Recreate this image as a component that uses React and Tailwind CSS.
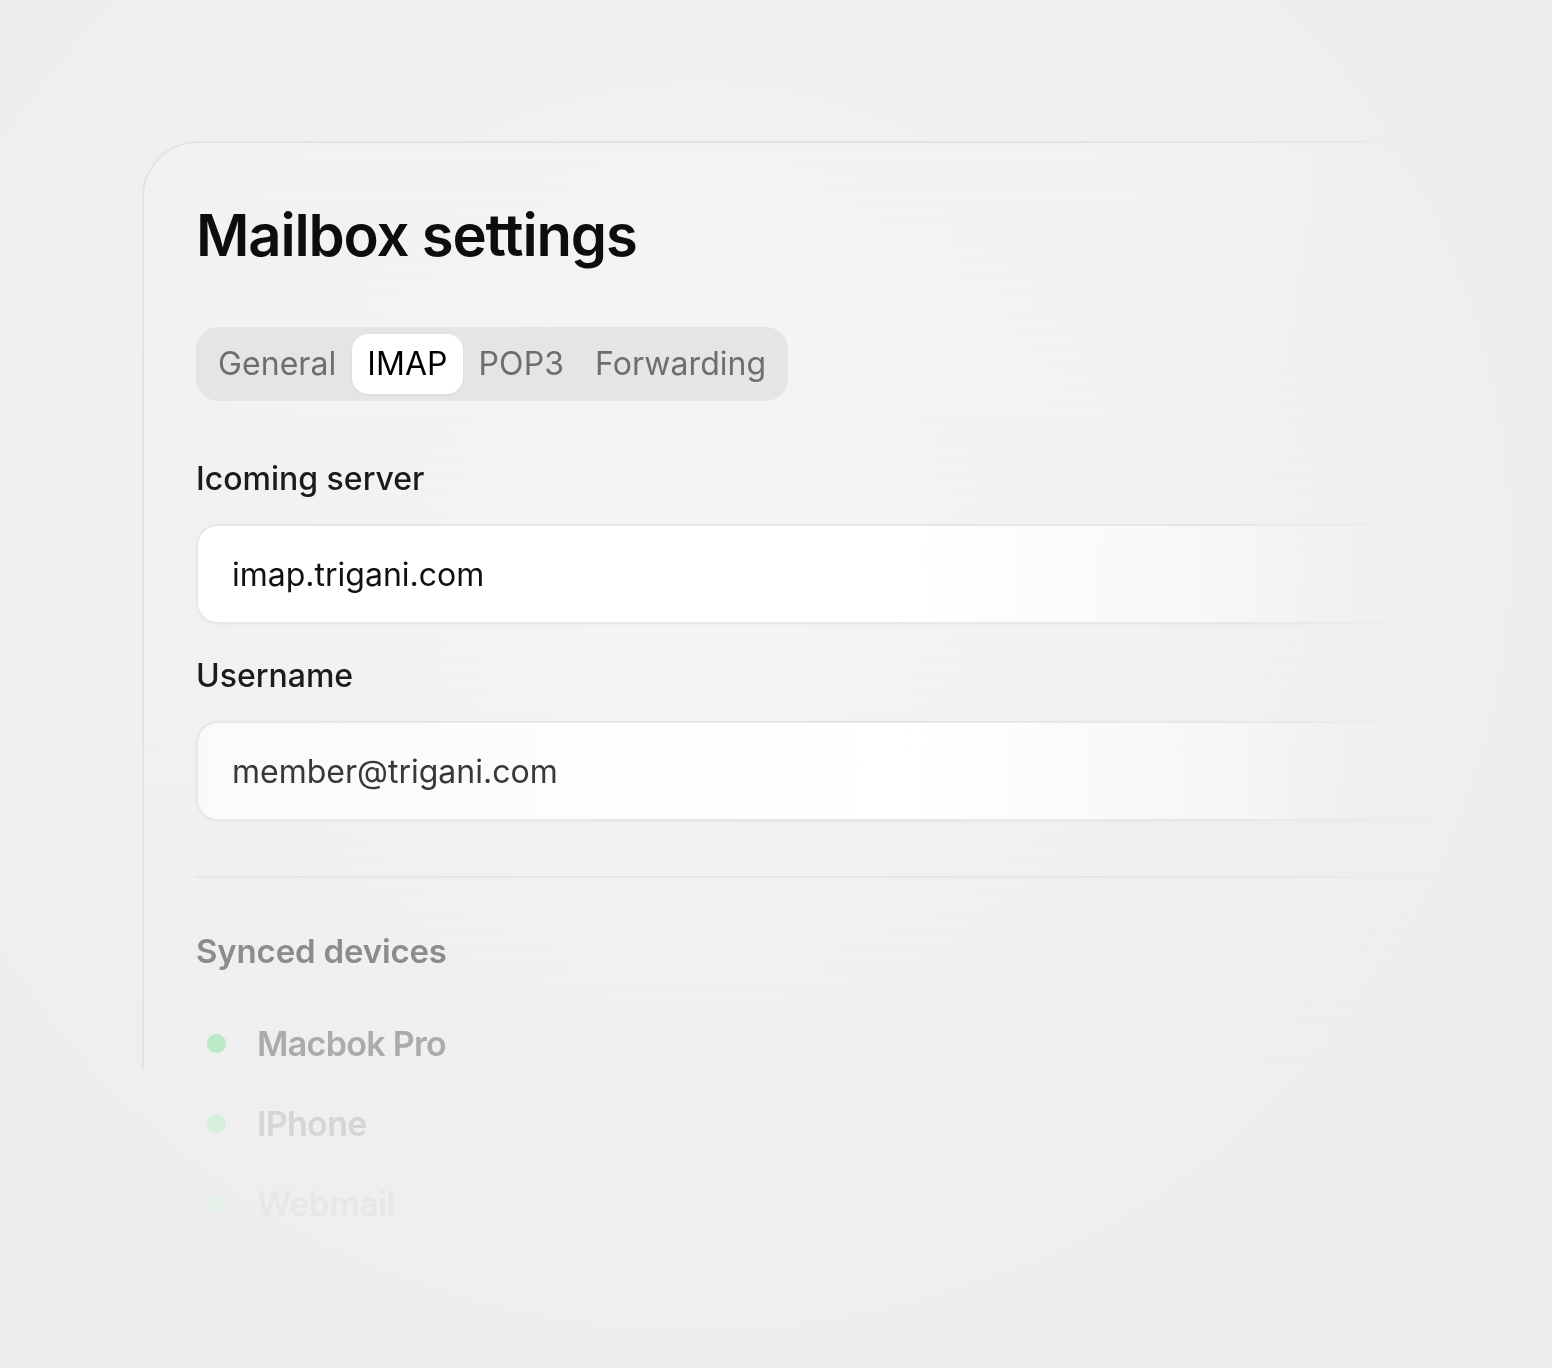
import React from "react";

const TABS = ["General", "IMAP", "POP3", "Forwarding"];

const DEVICES = [
  { name: "Macbok Pro", text: "text-[#ababab]", dot: "bg-[#b9e9c6]" },
  { name: "IPhone", text: "text-[#d5d5d5]", dot: "bg-[#d6efdc]" },
  { name: "Webmail", text: "text-[#e7e7e7]", dot: "bg-[#e9f1eb]" },
];

function Field({ label, value, className, inputClass }) {
  return (
    <div className={className}>
      <div className="text-[32px] leading-[40px] font-medium text-[#1b1b1b]">{label}</div>
      <input
        readOnly
        value={value}
        className={
          "mt-[25px] block h-[100px] w-full rounded-[22px] border-2 border-[#e7e7e7] px-[34px] text-[32px] outline-none shadow-[0_1px_3px_rgba(0,0,0,0.03)] " +
          inputClass
        }
      />
    </div>
  );
}

export default function App() {
  return (
    <div className="h-[1368px] w-full overflow-hidden bg-[radial-gradient(ellipse_at_45%_40%,#f4f4f4,#eeeeee_70%)] font-['Inter','Noto_Sans',sans-serif]">
      {/* fades everything out towards the right edge */}
      <div className="h-full pl-[142px] pt-[141px] [mask-image:linear-gradient(to_right,#000_1240px,transparent_1440px)]">
        <div className="h-[929px] rounded-tl-[56px] border-l-2 border-t-2 border-[#e3e3e3] bg-linear-to-b from-white/20 to-white/0 pl-[52px] pr-[100px] pt-[63px]">
          <h1 className="text-[58px] leading-none font-semibold tracking-[-0.02em] text-[#0d0d0d]">
            Mailbox settings
          </h1>

          <div className="mt-[63px] inline-flex gap-[1px] rounded-[22px] bg-[#e5e5e5] p-[7px]">
            {TABS.map((t) => (
              <div
                key={t}
                className={
                  t === "IMAP"
                    ? "flex h-[60px] items-center rounded-[16px] bg-white px-[15px] text-[32px] tracking-[0.002em] text-black shadow-[0_1px_3px_rgba(0,0,0,0.06)]"
                    : "flex h-[60px] items-center px-[15px] text-[32px] tracking-[0.002em] text-[#6e6e6e]"
                }
              >
                {t}
              </div>
            ))}
          </div>

          <Field
            className="mt-[58px]"
            label="Icoming server"
            value="imap.trigani.com"
            inputClass="bg-linear-to-r from-white from-55% to-white/0 to-100% text-[#111111]"
          />
          <Field
            className="mt-[32px]"
            label="Username"
            value="member@trigani.com"
            inputClass="bg-linear-to-r from-[#fafafa] via-white via-55% to-white/0 text-[#383838]"
          />

          <div className="mt-[55px] h-[2px] bg-[#e6e6e6]" />

          <div className="mt-[53px] text-[33px] leading-[41px] font-semibold tracking-[-0.005em] text-[#8c8c8c]">
            Synced devices
          </div>

          <ul className="mt-[31px]">
            {DEVICES.map((d) => (
              <li key={d.name} className="flex h-[80px] items-center">
                <span className={"ml-[11px] h-[19px] w-[19px] rounded-full " + d.dot} />
                <span className={"ml-[31px] text-[34px] font-semibold tracking-[-0.02em] " + d.text}>
                  {d.name}
                </span>
              </li>
            ))}
          </ul>
        </div>
      </div>
    </div>
  );
}
